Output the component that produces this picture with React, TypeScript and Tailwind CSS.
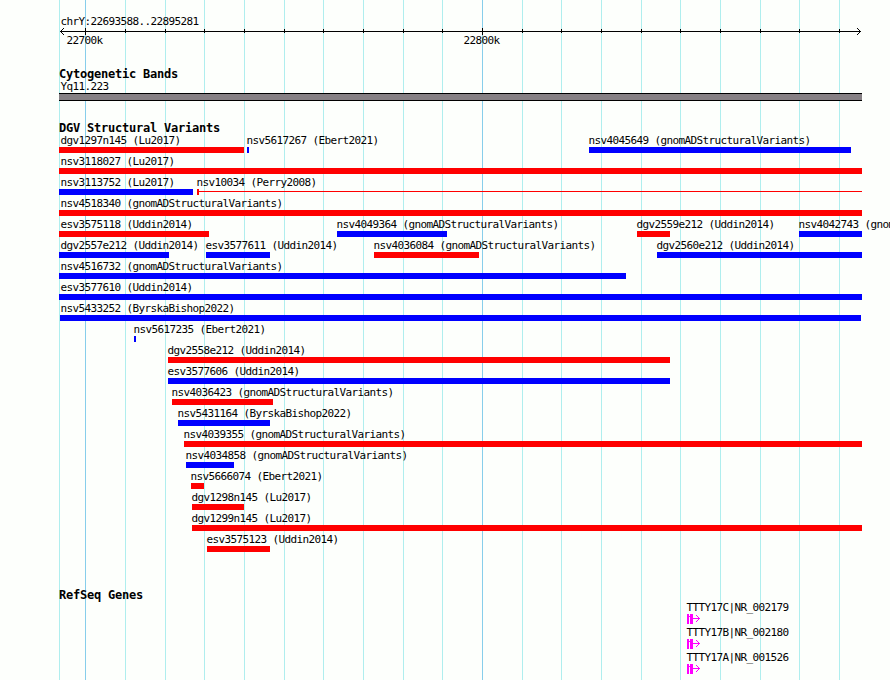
type Feature = {
  name: string;
  start: number;
  end: number;
  color: "red" | "blue";
  // width of the solid block when the rest is only a thin line
  block?: number;
};

const PANEL_LEFT = 59;

const minorLines = [
  59, 125, 165, 204, 244, 284, 323, 363, 403, 442, 522, 561, 601, 641, 680, 720,
  760, 799, 839,
];
const majorLines = [85, 482];

const rows: Feature[][] = [
  [
    { name: "dgv1297n145 (Lu2017)", start: 59, end: 244, color: "red" },
    { name: "nsv5617267 (Ebert2021)", start: 247, end: 249, color: "blue" },
    { name: "nsv4045649 (gnomADStructuralVariants)", start: 589, end: 851, color: "blue" },
  ],
  [{ name: "nsv3118027 (Lu2017)", start: 59, end: 862, color: "red" }],
  [
    { name: "nsv3113752 (Lu2017)", start: 59, end: 193, color: "blue" },
    { name: "nsv10034 (Perry2008)", start: 197, end: 862, color: "red", block: 2 },
  ],
  [{ name: "nsv4518340 (gnomADStructuralVariants)", start: 59, end: 862, color: "red" }],
  [
    { name: "esv3575118 (Uddin2014)", start: 59, end: 209, color: "red" },
    { name: "nsv4049364 (gnomADStructuralVariants)", start: 337, end: 447, color: "blue" },
    { name: "dgv2559e212 (Uddin2014)", start: 637, end: 670, color: "red" },
    { name: "nsv4042743 (gnomADStructuralVariants)", start: 799, end: 862, color: "blue" },
  ],
  [
    { name: "dgv2557e212 (Uddin2014)", start: 59, end: 169, color: "blue" },
    { name: "esv3577611 (Uddin2014)", start: 206, end: 270, color: "blue" },
    { name: "nsv4036084 (gnomADStructuralVariants)", start: 374, end: 479, color: "red" },
    { name: "dgv2560e212 (Uddin2014)", start: 657, end: 862, color: "blue" },
  ],
  [{ name: "nsv4516732 (gnomADStructuralVariants)", start: 59, end: 626, color: "blue" }],
  [{ name: "esv3577610 (Uddin2014)", start: 59, end: 862, color: "blue" }],
  [{ name: "nsv5433252 (ByrskaBishop2022)", start: 60, end: 861, color: "blue" }],
  [{ name: "nsv5617235 (Ebert2021)", start: 134, end: 136, color: "blue" }],
  [{ name: "dgv2558e212 (Uddin2014)", start: 168, end: 670, color: "red" }],
  [{ name: "esv3577606 (Uddin2014)", start: 168, end: 670, color: "blue" }],
  [{ name: "nsv4036423 (gnomADStructuralVariants)", start: 172, end: 273, color: "red" }],
  [{ name: "nsv5431164 (ByrskaBishop2022)", start: 178, end: 270, color: "blue" }],
  [{ name: "nsv4039355 (gnomADStructuralVariants)", start: 184, end: 862, color: "red" }],
  [{ name: "nsv4034858 (gnomADStructuralVariants)", start: 186, end: 234, color: "blue" }],
  [{ name: "nsv5666074 (Ebert2021)", start: 191, end: 204, color: "red" }],
  [{ name: "dgv1298n145 (Lu2017)", start: 192, end: 244, color: "red" }],
  [{ name: "dgv1299n145 (Lu2017)", start: 192, end: 862, color: "red" }],
  [{ name: "esv3575123 (Uddin2014)", start: 207, end: 270, color: "red" }],
];

const genes = ["TTTY17C|NR_002179", "TTTY17B|NR_002180", "TTTY17A|NR_001526"];

function GridLines() {
  return (
    <svg
      width="890"
      height="680"
      shapeRendering="crispEdges"
      className="absolute inset-0 -z-10"
    >
      {minorLines.map((x) => (
        <rect key={x} x={x} y="0" width="1" height="680" fill="#afeeee" />
      ))}
      {majorLines.map((x) => (
        <rect key={x} x={x} y="0" width="1" height="680" fill="#87ceeb" />
      ))}
    </svg>
  );
}

function Ruler() {
  return (
    <svg width="890" height="9" shapeRendering="crispEdges" className="-mt-px block">
      <rect x="60" y="4" width="801" height="1" />
      {minorLines.slice(1).map((x) => (
        <rect key={x} x={x} y="2" width="1" height="4" />
      ))}
      {majorLines.map((x) => (
        <rect key={x} x={x} y="1" width="1" height="7" />
      ))}
      <path d="M61 3h1v1h-1zM62 2h1v1h-1zM63 1h1v1h-1zM61 5h1v1h-1zM62 6h1v1h-1zM63 7h1v1h-1z" />
      <path d="M859 3h1v1h-1zM858 2h1v1h-1zM857 1h1v1h-1zM859 5h1v1h-1zM858 6h1v1h-1zM857 7h1v1h-1z" />
    </svg>
  );
}

function Heading({ children }: { children: string }) {
  return (
    <h2 className="h-[14px] pl-[59px] text-[12px] font-bold leading-[14px] tracking-[-0.224px]">
      {children}
    </h2>
  );
}

function FeatureItem({ feature }: { feature: Feature }) {
  const { name, start, end, color, block } = feature;
  const fill = color === "red" ? "bg-[#ff0000]" : "bg-[#0000ff]";
  const clipped = start <= PANEL_LEFT + 1;
  return (
    <div className="col-start-1 row-start-1 w-0" style={{ marginLeft: start }}>
      <p className="h-[13px]" style={{ marginLeft: clipped ? 60.4 - start : -0.6 }}>
        {name}
      </p>
      <div className="flex h-[6px] items-center" style={{ width: end - start }}>
        {block ? (
          <>
            <div className={`h-full shrink-0 ${fill}`} style={{ width: block }} />
            <div className={`mb-px h-px flex-1 ${fill}`} />
          </>
        ) : (
          <div className={`h-full w-full ${fill}`} />
        )}
      </div>
    </div>
  );
}

function GeneGlyph() {
  return (
    <svg
      width="14"
      height="10"
      shapeRendering="crispEdges"
      fill="#ff00ff"
      className="ml-[0.6px] block"
    >
      <rect x="0" y="0" width="2" height="10" />
      <rect x="2" y="2" width="1" height="1" />
      <rect x="3" y="0" width="3" height="10" />
      <rect x="6" y="4" width="7" height="1" />
      <path d="M11 3h1v1h-1zM10 2h1v1h-1zM9 1h1v1h-1zM11 5h1v1h-1zM10 6h1v1h-1zM9 7h1v1h-1z" />
    </svg>
  );
}

export default function App() {
  return (
    <main className="relative isolate flex h-[680px] w-[890px] flex-col overflow-hidden whitespace-nowrap bg-[#fdfffc] font-['DejaVu_Sans_Mono','Liberation_Mono',monospace] text-[11px] leading-[13px] tracking-[-0.622px] text-black">
      <GridLines />

      <header className="pt-[15px]">
        <p className="h-[13px] pl-[60.4px]">chrY:22693588..22895281</p>
        <Ruler />
        <div className="-mt-[2px] flex h-[13px] pl-[66.4px]">
          <span className="w-[397px]">22700k</span>
          <span>22800k</span>
        </div>
      </header>

      <section className="mt-[20px]">
        <Heading>Cytogenetic Bands</Heading>
        <p className="-mt-px h-[13px] pl-[60.4px]">Yq11.223</p>
        <div className="ml-[59px] h-[8px] w-[803px] border-y border-black bg-[#868084]" />
      </section>

      <section className="mt-[20px]">
        <Heading>DGV Structural Variants</Heading>
        <div className="-mt-px flex flex-col gap-[2px]">
          {rows.map((row) => (
            <div key={row[0].name} className="grid h-[19px]">
              {row.map((f) => (
                <FeatureItem key={f.name} feature={f} />
              ))}
            </div>
          ))}
        </div>
      </section>

      <section className="mt-[36px]">
        <Heading>RefSeq Genes</Heading>
        <ul className="-mt-px flex flex-col gap-[2px] pl-[686.4px]">
          {genes.map((gene) => (
            <li key={gene} className="h-[23px]">
              <p className="h-[13px]">{gene}</p>
              <GeneGlyph />
            </li>
          ))}
        </ul>
      </section>
    </main>
  );
}
